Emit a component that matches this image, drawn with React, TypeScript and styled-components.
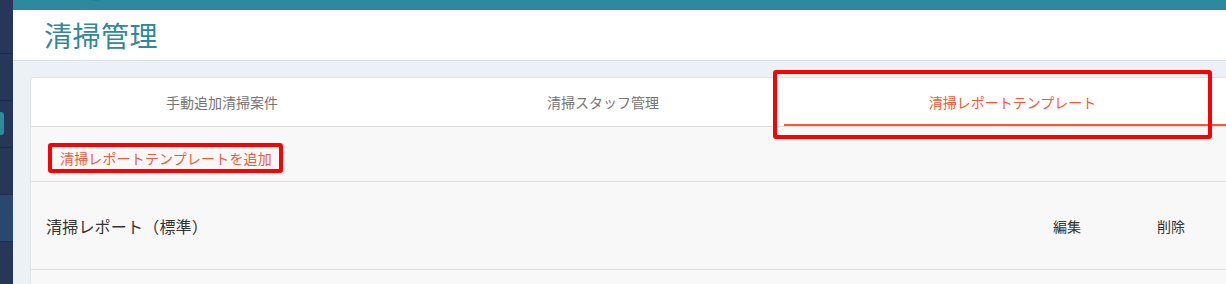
import React from 'react'
import styled, { createGlobalStyle } from 'styled-components'

const GlobalStyle = createGlobalStyle`
  html, body {
    margin: 0;
    padding: 0;
    overflow: hidden;
    background: #ecf1f5;
  }
  body {
    font-family: 'Noto Sans CJK JP', 'Noto Sans', sans-serif;
  }
`

const Layout = styled.div`
  display: flex;
  width: 1226px;
  height: 284px;
  overflow: hidden;
`
const Sidebar = styled.nav`
  width: 13px;
  flex: none;
  background: #27375a;
  display: flex;
  flex-direction: column;
`
const SideItem = styled.div<{ $h: number; $active?: boolean }>`
  position: relative;
  height: ${p => p.$h}px;
  flex: none;
  border-bottom: 1px solid #1f2c49;
  background: ${p => (p.$active ? '#294870' : 'transparent')};
`
const SideMarker = styled.span`
  position: absolute;
  left: 0;
  top: 11px;
  width: 4px;
  height: 23px;
  border-radius: 0 3px 3px 0;
  background: #2d8c9c;
`
const Main = styled.div`
  flex: 1;
  display: flex;
  flex-direction: column;
  min-width: 0;
`
const TopBar = styled.div`
  position: relative;
  height: 10px;
  flex: none;
  background: #2d8a9e;
  &::after {
    content: '';
    position: absolute;
    left: 72px;
    top: -8px;
    width: 18px;
    height: 10px;
    border-radius: 50%;
    background: radial-gradient(ellipse at center, rgba(20, 50, 60, 0.45), rgba(20, 50, 60, 0) 70%);
  }
`
const Header = styled.header`
  height: 50px;
  flex: none;
  background: #fff;
  border-bottom: 1px solid #dae1e6;
  display: flex;
  align-items: center;
  padding-left: 31px;
`
const Title = styled.h1`
  margin: 0;
  font-size: 28px;
  font-weight: 400;
  color: #2f889b;
  letter-spacing: 0.5px;
`
const Content = styled.main`
  flex: 1;
  padding: 16px 0 0 17px;
`
const Card = styled.section`
  box-sizing: border-box;
  width: 1203px;
  height: 300px;
  background: #f8f8f8;
  border: 1px solid #dde3e8;
  border-radius: 4px;
`
const Tabs = styled.div`
  display: grid;
  grid-template-columns: 382px 380px 1fr;
  height: 48px;
  background: #fff;
  border-bottom: 1px solid #dedede;
  border-radius: 4px 4px 0 0;
`
const Tab = styled.div<{ $active?: boolean }>`
  position: relative;
  display: flex;
  align-items: center;
  justify-content: center;
  font-size: 14px;
  color: ${p => (p.$active ? '#ff5532' : '#757575')};
  ${p =>
    p.$active &&
    `
    &::after {
      content: '';
      position: absolute;
      left: -9px;
      right: -20px;
      bottom: 0;
      height: 2px;
      background: #ff5532;
    }
  `}
`
const Annotation = styled.span`
  position: absolute;
  box-sizing: border-box;
  border: 4px solid #ff0000;
  border-radius: 3px;
  pointer-events: none;
  z-index: 2;
`
const TabAnnotation = styled(Annotation)`
  top: -8px;
  left: -20px;
  width: 439px;
  height: 69px;
`
const ButtonAnnotation = styled(Annotation)`
  inset: 0;
`
const Toolbar = styled.div`
  height: 55px;
  box-sizing: border-box;
  padding: 16px 0 0 17px;
  border-bottom: 1px solid #dedede;
`
const AddButton = styled.button`
  position: relative;
  height: 30px;
  padding: 0 11px 0 12px;
  border: none;
  background: transparent;
  font-family: inherit;
  font-size: 14px;
  line-height: 30px;
  letter-spacing: 0.15px;
  color: #f3583c;
  cursor: pointer;
`
const Row = styled.div`
  display: flex;
  align-items: center;
  height: 87px;
  padding: 0 9px 0 15px;
  border-bottom: 1px solid #dedede;
`
const RowName = styled.div`
  flex: 1;
  font-size: 16px;
  letter-spacing: 0.2px;
  color: #333;
`
const RowAction = styled.div`
  width: 104px;
  text-align: center;
  font-size: 14px;
  color: #333;
  cursor: pointer;
`

const tabs = ['手動追加清掃案件', '清掃スタッフ管理', '清掃レポートテンプレート']
const sideItems = [
  { h: 53 },
  { h: 46 },
  { h: 46, marker: true },
  { h: 46 },
  { h: 46, active: true },
  { h: 46 },
]

export default function App() {
  return (
    <>
      <GlobalStyle />
      <Layout>
        <Sidebar>
          {sideItems.map((item, i) => (
            <SideItem key={i} $h={item.h} $active={item.active}>
              {item.marker && <SideMarker />}
            </SideItem>
          ))}
        </Sidebar>
        <Main>
          <TopBar />
          <Header>
            <Title>清掃管理</Title>
          </Header>
          <Content>
            <Card>
              <Tabs>
                {tabs.map((t, i) => (
                  <Tab key={t} $active={i === 2}>
                    {t}
                    {i === 2 && <TabAnnotation />}
                  </Tab>
                ))}
              </Tabs>
              <Toolbar>
                <AddButton>
                  清掃レポートテンプレートを追加
                  <ButtonAnnotation />
                </AddButton>
              </Toolbar>
              <Row>
                <RowName>清掃レポート（標準）</RowName>
                <RowAction>編集</RowAction>
                <RowAction>削除</RowAction>
              </Row>
            </Card>
          </Content>
        </Main>
      </Layout>
    </>
  )
}
